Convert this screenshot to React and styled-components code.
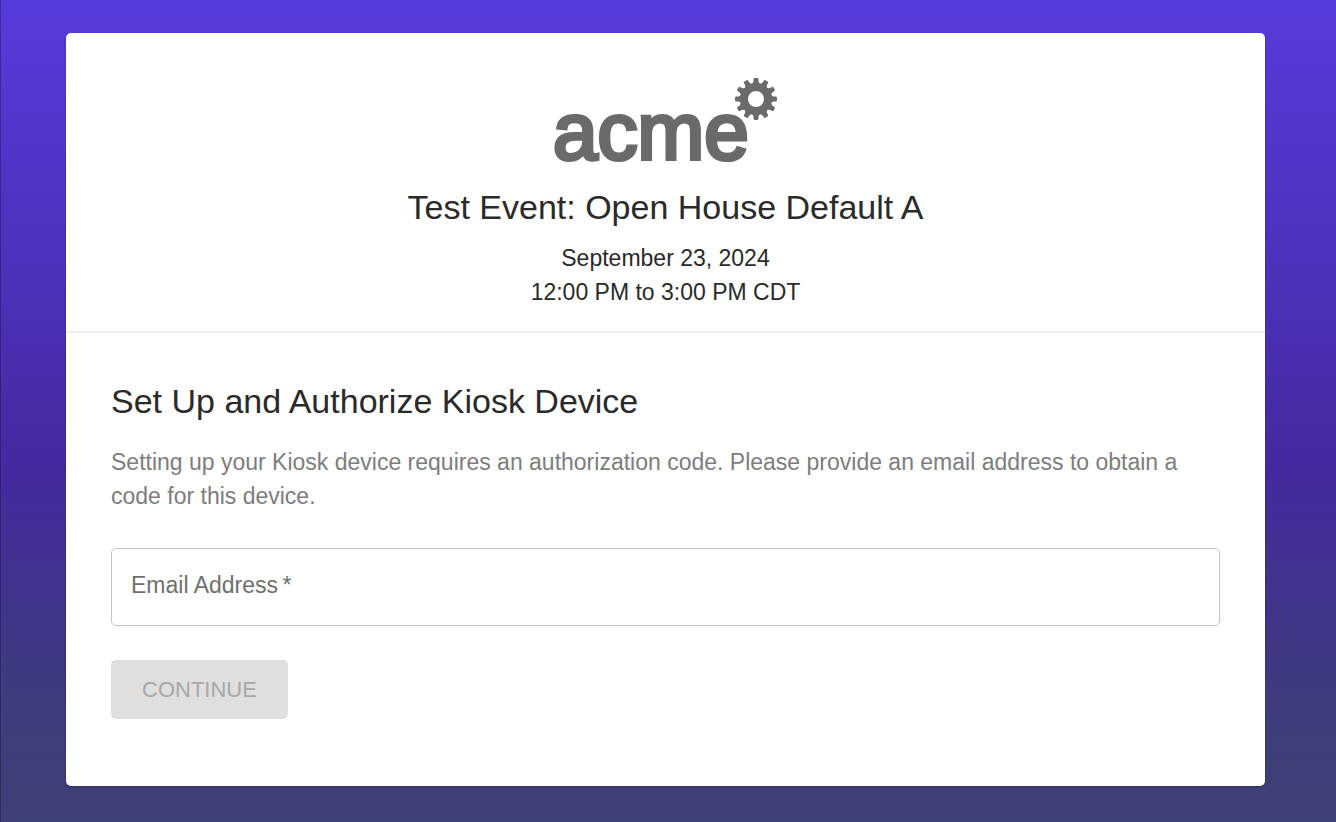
import { useState } from "react";
import styled, { createGlobalStyle } from "styled-components";

const GlobalStyle = createGlobalStyle`
  * {
    box-sizing: border-box;
  }
  body {
    margin: 0;
    font-family: "Liberation Sans", Helvetica, Arial, sans-serif;
    color: #2a2a2a;
  }
`;

const Page = styled.div`
  min-height: 100vh;
  padding: 33px 71px 36px 66px;
  box-shadow: inset 1px 0 rgba(0, 0, 0, 0.25);
  background: linear-gradient(180deg, #563bdc 0%, #432a9f 57%, #3f3b7d 85%, #3f4075 100%);
`;

const Card = styled.main`
  background: #fff;
  border-radius: 5px;
  box-shadow: 0 1px 2px rgba(0, 0, 0, 0.3);
`;

const EventHeader = styled.header`
  display: flex;
  flex-direction: column;
  align-items: center;
  padding: 40px 45px 22px;
  border-bottom: 2px solid #eee;
  text-align: center;
`;

const LogoSvg = styled.svg`
  display: block;
  width: 232px;
  height: 108px;
  fill: #6a6a6a;
  text {
    font-family: "Liberation Sans", Arial, sans-serif;
    font-size: 80px;
    font-weight: normal;
    stroke: #6a6a6a;
    stroke-width: 4;
  }
`;

const Title = styled.h1`
  margin: 4px 0 12px;
  font-size: 34px;
  line-height: 44px;
  font-weight: 400;
`;

const EventTime = styled.p`
  margin: 0;
  font-size: 23px;
  line-height: 34px;
`;

const Setup = styled.form`
  display: flex;
  flex-direction: column;
  align-items: flex-start;
  padding: 45px 45px 67px;
`;

const SectionTitle = styled.h2`
  margin: 0 0 21px;
  font-size: 34px;
  line-height: 46px;
  font-weight: 400;
`;

const Hint = styled.p`
  margin: 0 0 35px;
  font-size: 23px;
  line-height: 34px;
  color: #7d7d7d;
`;

const Field = styled.div`
  position: relative;
  width: 100%;
  label {
    position: absolute;
    top: 20px;
    left: 20px;
    font-size: 23px;
    line-height: 34px;
    color: #6f6f6f;
    pointer-events: none;
  }
  input {
    display: block;
    width: 100%;
    height: 78px;
    padding: 0 20px;
    border: 1px solid #c4c4c4;
    border-radius: 5px;
    outline: none;
    background: transparent;
    font: inherit;
    font-size: 23px;
  }
`;

const SubmitButton = styled.button`
  margin-top: 34px;
  padding: 0 31px;
  height: 59px;
  border: none;
  border-radius: 5px;
  background: #3f2fb0;
  color: #fff;
  font: inherit;
  font-size: 22px;
  text-transform: uppercase;
  cursor: pointer;
  &:disabled {
    background: #dfdfdf;
    color: #a8a8a8;
    cursor: default;
  }
`;

const TEETH = Array.from({ length: 12 }, (_, i) => i * 30);

const Logo = () => (
  <LogoSvg viewBox="0 0 232 108" role="img" aria-label="acme">
    <text x="3" y="86">
      acme
    </text>
    <g transform="translate(206 26)">
      <circle r="12" fill="none" stroke="#6a6a6a" strokeWidth="8" />
      {TEETH.map((angle) => (
        <path
          key={angle}
          d="M-4 -15L-2.6 -17L-2.4 -20Q-2.2 -21 -1.2 -21H1.2Q2.2 -21 2.4 -20L2.6 -17L4 -15Z"
          transform={`rotate(${angle})`}
        />
      ))}
    </g>
  </LogoSvg>
);

export default function App() {
  const [email, setEmail] = useState("");

  return (
    <>
      <GlobalStyle />
      <Page>
        <Card>
          <EventHeader>
            <Logo />
            <Title>Test Event: Open House Default A</Title>
            <EventTime>September 23, 2024</EventTime>
            <EventTime>12:00 PM to 3:00 PM CDT</EventTime>
          </EventHeader>
          <Setup onSubmit={(ev) => ev.preventDefault()}>
            <SectionTitle>Set Up and Authorize Kiosk Device</SectionTitle>
            <Hint>
              Setting up your Kiosk device requires an authorization code. Please provide an email
              address to obtain a code for this device.
            </Hint>
            <Field>
              {!email && <label htmlFor="email">Email Address&thinsp;*</label>}
              <input
                id="email"
                type="email"
                aria-label="Email Address"
                value={email}
                onChange={(ev) => setEmail(ev.target.value)}
              />
            </Field>
            <SubmitButton type="submit" disabled={!email.trim()}>
              Continue
            </SubmitButton>
          </Setup>
        </Card>
      </Page>
    </>
  );
}
